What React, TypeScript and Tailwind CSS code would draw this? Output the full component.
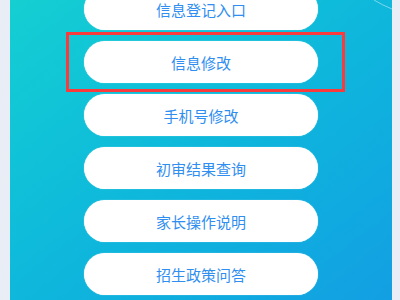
import React from "react";

const items = ["信息登记入口", "信息修改", "手机号修改", "初审结果查询", "家长操作说明", "招生政策问答"];

export default function App() {
  return (
    <div className="w-[400px] h-[300px] overflow-hidden bg-[#e9edf5] flex">
      <div className="relative ml-[10px] w-[382px] h-[300px] overflow-hidden bg-gradient-to-br from-[#15cfd2] to-[#139fe3]">
        <svg className="absolute right-0 top-0" width="18" height="10" viewBox="0 0 18 10">
          <path d="M0 0 Q8 5 18 9" stroke="rgba(255,255,255,0.45)" strokeWidth="1" fill="none" />
        </svg>
        <div className="flex flex-col gap-[11px] mt-[-12px] ml-[74px]">
          {items.map((t) => (
            <div
              key={t}
              className="w-[234px] h-[42px] rounded-full bg-white flex items-center justify-center shadow-[0_0_1px_rgba(255,255,255,0.8)]"
            >
              <span
                className="text-[15px] leading-[16px] text-[#2f8ef0] pt-[1px]"
                style={{ fontFamily: '"Noto Sans CJK SC", "Noto Sans", sans-serif' }}
              >
                {t}
              </span>
            </div>
          ))}
        </div>
        <div className="absolute left-[56px] top-[32px] w-[279px] h-[60px] border-[3px] border-[#fb3b3b]" />
      </div>
    </div>
  );
}
